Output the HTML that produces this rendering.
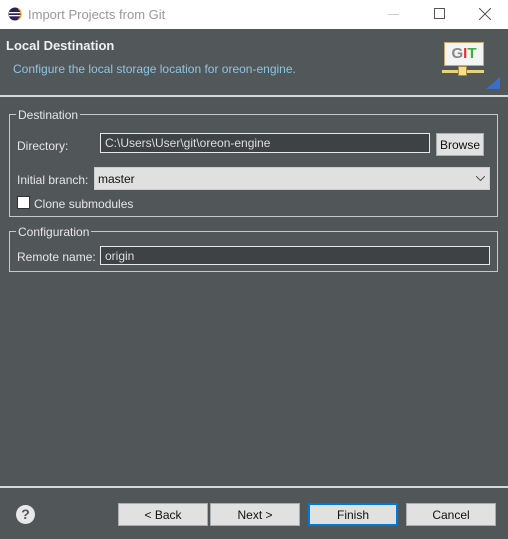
<!DOCTYPE html>
<html><head><style>
*{box-sizing:border-box;margin:0;padding:0}
body{width:508px;height:539px;background:#515658;font-family:"Liberation Sans",sans-serif;font-size:12px;color:#e6e6e6;position:relative;overflow:hidden}
.a{position:absolute}
.title{left:0;top:0;width:508px;height:29px;background:#fff;color:#999;font-size:13px}
.hdr{left:0;top:29px;width:508px;height:66px;background:#52575a}
.grp{border:1px solid #c8c8c8}
.leg{background:#515658;padding:0 2px;line-height:13px}
.inp{background:#3f4245;border:1px solid #e8e8e8;color:#ddd;padding-left:4px;line-height:18px}
.btn{background:#e1e1e1;border:1px solid #adadad;color:#111;text-align:center;line-height:22px}
</style></head><body>
<div class="a title">
 <svg class="a" style="left:8px;top:7px" width="14" height="14" viewBox="0 0 14 14"><circle cx="7" cy="7" r="6.5" fill="#2c2255"/><rect x="1" y="5" width="12" height="1.3" fill="#fff"/><rect x="1" y="8" width="12" height="1.3" fill="#fff"/><path d="M10 1.5A6.5 6.5 0 0 1 10 12.5" stroke="#f7941e" stroke-width="1.2" fill="none"/></svg>
 <div class="a" style="left:28px;top:7px">Import Projects from Git</div>
 <div class="a" style="left:388px;top:14px;width:11px;height:1px;background:#ccc"></div>
 <div class="a" style="left:434px;top:8px;width:11px;height:11px;border:1px solid #555"></div>
 <svg class="a" style="left:479px;top:8px" width="12" height="12"><path d="M0 0L12 12M12 0L0 12" stroke="#555" stroke-width="1"/></svg>
</div>
<div class="a hdr">
 <div class="a" style="left:6px;top:9px;font-weight:bold;font-size:13px;color:#f0f0f0">Local Destination</div>
 <div class="a" style="left:13px;top:33px;color:#8fc4e0">Configure the local storage location for oreon-engine.</div>
 <div class="a" style="left:444px;top:13px;width:40px;height:24px;background:#f4f4f4;border:1px solid #c9a76a;font-weight:bold;font-size:15px;text-align:center;line-height:22px"><span style="color:#888">G</span><span style="color:#d33">I</span><span style="color:#4a4">T</span></div>
 <div class="a" style="left:442px;top:41px;width:42px;height:3px;background:#e8d27a"></div>
 <div class="a" style="left:458px;top:37px;width:9px;height:10px;background:#f5e08a;border:1px solid #a58a40"></div>
 <svg class="a" style="left:486px;top:48px" width="14" height="12"><path d="M0 12L14 0V12Z" fill="#3a6ec8"/></svg>
</div>
<div class="a" style="left:0;top:95px;width:508px;height:2px;background:#d8d8d8"></div>

<div class="a grp" style="left:9px;top:114px;width:489px;height:103px"></div>
<div class="a leg" style="left:16px;top:109px">Destination</div>
<div class="a" style="left:17px;top:139px">Directory:</div>
<div class="a inp" style="left:100px;top:133px;width:330px;height:20px">C:\Users\User\git\oreon-engine</div>
<div class="a btn" style="left:436px;top:133px;width:48px;height:23px">Browse</div>
<div class="a" style="left:17px;top:173px">Initial branch:</div>
<div class="a" style="left:94px;top:167px;width:396px;height:23px;background:#e0e0e0;border:1px solid #ccc;color:#111;padding-left:3px;line-height:22px">master</div>
<svg class="a" style="left:476px;top:176px" width="9" height="6"><path d="M0 0L4.5 4.5L9 0" stroke="#555" fill="none"/></svg>
<div class="a" style="left:17px;top:196px;width:13px;height:13px;background:#fff;border:1px solid #333"></div>
<div class="a" style="left:34px;top:197px">Clone submodules</div>

<div class="a grp" style="left:9px;top:231px;width:489px;height:41px"></div>
<div class="a leg" style="left:16px;top:226px">Configuration</div>
<div class="a" style="left:17px;top:250px">Remote name:</div>
<div class="a inp" style="left:100px;top:246px;width:390px;height:19px">origin</div>

<div class="a" style="left:0;top:486px;width:508px;height:2px;background:#d8d8d8"></div>
<div class="a" style="left:16px;top:505px;width:19px;height:19px;border-radius:50%;background:#e8e8e8;color:#515658;font-weight:bold;font-size:14px;text-align:center;line-height:19px">?</div>
<div class="a btn" style="left:118px;top:503px;width:90px;height:23px">&lt; Back</div>
<div class="a btn" style="left:210px;top:503px;width:90px;height:23px">Next &gt;</div>
<div class="a btn" style="left:308px;top:503px;width:90px;height:23px;border:2px solid #0078d7;line-height:20px">Finish</div>
<div class="a btn" style="left:406px;top:503px;width:90px;height:23px">Cancel</div>
</body></html>
